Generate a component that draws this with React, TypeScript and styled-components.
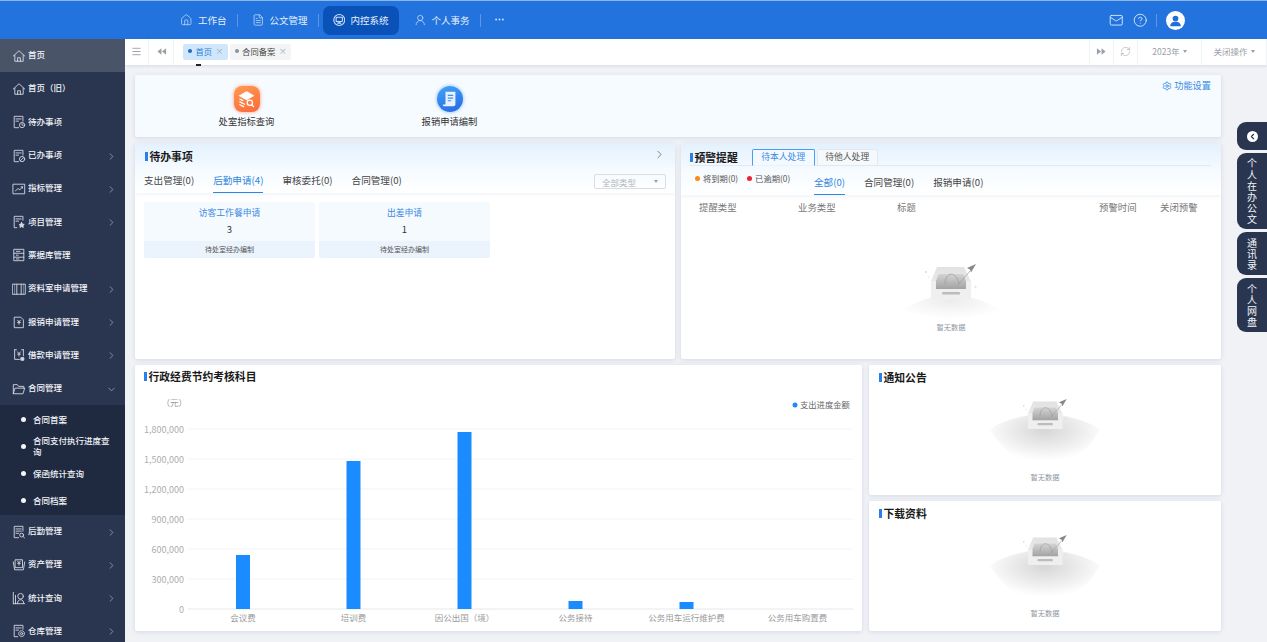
import React from "react";
import styled, { createGlobalStyle } from "styled-components";
import { House, FileText, UserRound, Mail, CircleHelp, ChevronRight, ChevronDown, Menu, RefreshCw, Settings, ChevronLeft } from "lucide-react";

const Global = createGlobalStyle`
  html, body { margin: 0; padding: 0; width: 100%; height: 100%; overflow: hidden; background: #f0f2f6; }
  #root { height: 100%; }
  * { box-sizing: border-box; }
  body { font-family: "Noto Sans CJK SC", "Noto Sans", sans-serif; }
`;

const Page = styled.div`
  position: relative;
  width: 1267px;
  height: 642px;
  overflow: hidden;
  display: flex;
  flex-direction: column;
`;

/* ---------- header ---------- */
const Header = styled.header`
  height: 39px;
  flex: none;
  background: #2273dd;
  border-top: 1px solid #8fb6e8;
  display: flex;
  align-items: center;
  padding: 0 82px 0 170px;
  color: #e6f0fc;
`;
const TopNav = styled.nav`
  display: flex;
  align-items: center;
  flex: 1;
`;
const NavItem = styled.div<{ $active?: boolean }>`
  height: 29px;
  display: flex;
  align-items: center;
  gap: 5.5px;
  padding: 0 10px;
  font-size: 9.5px;
  padding-bottom: 1px;
  border-radius: 7px;
  background: ${(p) => (p.$active ? "#0a52b8" : "transparent")};
  svg { width: 12.5px; height: 14px; stroke-width: 1.4; color: #cfe0f7; }
`;
const NavDots = styled(NavItem)`
  svg { width: 9px; height: 9px; }
`;
const NavDivider = styled.span<{ $hidden?: boolean }>`
  width: 1px;
  height: 13px;
  margin: 0 4px 0 0;
  background: ${(p) => (p.$hidden ? "transparent" : "#5d97e4")};
`;
const HeaderTools = styled.div`
  display: flex;
  align-items: center;
  gap: 9px;
  svg.tool { width: 14.5px; height: 14.5px; stroke-width: 1.4; color: #eaf2fd; }
`;
const ToolDivider = styled.span`
  width: 1px;
  height: 13px;
  background: #5d97e4;
`;
const Avatar = styled.span`
  width: 19px;
  height: 19px;
  border-radius: 50%;
  background: #fff;
  display: flex;
  align-items: center;
  justify-content: center;
  overflow: hidden;
`;

/* ---------- body layout ---------- */
const Body = styled.div`
  flex: 1;
  display: flex;
  min-height: 0;
`;
const Sidebar = styled.aside`
  width: 125px;
  flex: none;
  background: #2a3550;
  color: #f2f4f8;
  overflow: hidden;
`;
const SideItem = styled.div<{ $active?: boolean }>`
  height: 33.3px;
  display: flex;
  align-items: center;
  padding: 0 8px 3px 12px;
  gap: 2px;
  font-size: 8.5px;
  font-weight: 500;
  white-space: nowrap;
  background: ${(p) => (p.$active ? "#4a5469" : "transparent")};
  > svg:first-child { width: 14px; height: 14px; flex: none; color: #d9dde6; margin-top: 3px; }
`;
const SideArrow = styled.span`
  margin-left: auto;
  margin-top: 4px;
  display: flex;
  color: #c2c8d3;
  svg { width: 11px; height: 11px; stroke-width: 1.3; }
`;
const SubMenu = styled.div`
  background: #1f2a40;
  height: 109.6px;
  padding-top: 1px;
`;
const SubItem = styled.div`
  height: 26.8px;
  display: flex;
  align-items: center;
  padding: 0 14px 0 33px;
  position: relative;
  font-size: 8.5px;
  line-height: 11px;
  font-weight: 500;
  &::before {
    content: "";
    position: absolute;
    left: 21px;
    top: 50%;
    width: 5px;
    height: 5px;
    margin-top: -2.5px;
    border-radius: 50%;
    background: #f4f5f8;
  }
`;
const Content = styled.div`
  flex: 1;
  min-width: 0;
  display: flex;
  flex-direction: column;
`;

/* ---------- tab strip ---------- */
const TabStrip = styled.div`
  height: 26px;
  flex: none;
  background: #fff;
  display: flex;
  align-items: stretch;
  box-shadow: 0 1px 3px rgba(60, 80, 110, 0.14);
  position: relative;
`;
const StripButton = styled.div<{ $w: number }>`
  width: ${(p) => p.$w}px;
  flex: none;
  display: flex;
  align-items: center;
  justify-content: center;
  border-right: 1px solid #f2f3f5;
  color: #9aa0a8;
  font-size: 8.5px;
  gap: 1px;
  padding-bottom: 2px;
  svg { width: 11px; height: 11px; }
`;
const StripLead = styled(StripButton)`
  border-left: 1px solid #f2f3f5;
`;
const PageTabs = styled.div`
  flex: 1;
  display: flex;
  align-items: center;
  gap: 2px;
  padding: 0 0 1px 9px;
`;
const PageTab = styled.div<{ $active?: boolean }>`
  height: 16px;
  display: flex;
  align-items: center;
  padding: 0 4px 1px 5px;
  gap: 3.5px;
  border-radius: 2px;
  font-size: 8.3px;
  color: ${(p) => (p.$active ? "#2f7fd6" : "#444")};
  background: ${(p) => (p.$active ? "#cfe6fb" : "#f3f4f5")};
  &::before {
    content: "";
    width: 4px;
    height: 4px;
    border-radius: 50%;
    background: ${(p) => (p.$active ? "#1769cf" : "#8c929a")};
  }
`;
const TabClose = styled.span`
  color: #a0a6ae;
  font-size: 8px;
  line-height: 1;
`;
const Caret = styled.i`
  width: 0;
  height: 0;
  border: 2.5px solid transparent;
  border-top: 3px solid #9aa0a8;
  border-bottom: 0;
  margin-left: 2px;
`;
const StrayMark = styled.span`
  position: absolute;
  left: 71px;
  top: 25px;
  width: 5px;
  height: 2px;
  background: #222;
`;

/* ---------- dashboard ---------- */
const Main = styled.main`
  flex: 1;
  min-height: 0;
  padding: 10px 46px 0 10px;
  display: grid;
  grid-template-rows: 62px 216px 266px;
  row-gap: 6px;
`;
const Card = styled.section`
  background: #fff;
  border-radius: 2px;
  box-shadow: 0 1px 4px rgba(70, 90, 130, 0.16);
  position: relative;
  overflow: hidden;
  min-height: 0;
`;
const ShortcutCard = styled(Card)`
  background: #f6fbff;
  display: flex;
  padding-left: 10px;
`;
const Shortcut = styled.div`
  width: 203px;
  padding-top: 11px;
  display: flex;
  flex-direction: column;
  align-items: center;
  gap: 3px;
  font-size: 9.3px;
  line-height: 13px;
  color: #333;
`;
const ShortIconOrange = styled.div`
  width: 26px;
  height: 26px;
  border-radius: 8px;
  background: linear-gradient(160deg, #ff9a4f, #fb6a3c);
  box-shadow: 0 0 3px 1px rgba(250, 120, 90, 0.45);
  display: flex;
  align-items: center;
  justify-content: center;
`;
const ShortIconBlue = styled(ShortIconOrange)`
  border-radius: 50%;
  background: linear-gradient(160deg, #44a4f5, #2468e4);
  box-shadow: 0 0 3px 1px rgba(80, 160, 250, 0.45);
`;
const SettingLink = styled.div`
  position: absolute;
  right: 10px;
  top: 4px;
  display: flex;
  align-items: center;
  gap: 2px;
  color: #3a8ae2;
  font-size: 9.2px;
  line-height: 13px;
  svg { width: 10px; height: 10px; }
`;
const TwoCols = styled.div`
  display: grid;
  grid-template-columns: 540px 540px;
  column-gap: 6px;
  min-height: 0;
`;
const ChartRow = styled.div`
  display: grid;
  grid-template-columns: 727px 352px;
  column-gap: 7px;
  min-height: 0;
`;
const SideStack = styled.div`
  display: grid;
  grid-template-rows: 130px 130px;
  row-gap: 6px;
  min-height: 0;
`;
const PanelHead = styled.div`
  height: 50px;
  background: linear-gradient(180deg, #e3f1fd 0%, #f6fbff 55%, #fff 100%);
  box-shadow: 0 2px 3px rgba(90, 120, 170, 0.08);
  position: relative;
`;
const Title = styled.h3`
  margin: 0;
  font-size: 10.8px;
  line-height: 14px;
  font-weight: 700;
  color: #1a1a1a;
  display: flex;
  align-items: center;
  gap: 2px;
  &::before {
    content: "";
    width: 2.5px;
    height: 9px;
    background: #2a7ff0;
  }
`;
const TodoHeadRow = styled.div`
  padding: 6px 9px 0 10px;
  display: flex;
  justify-content: space-between;
  align-items: center;
  svg { width: 13px; height: 13px; color: #555; stroke-width: 1.3; margin-top: -4px; }
`;
const TabRow = styled.div`
  display: flex;
  gap: 19px;
  font-size: 9.6px;
  color: #444;
`;
const TodoTabs = styled(TabRow)`
  position: absolute;
  left: 9px;
  right: 9px;
  bottom: 0;
  align-items: flex-end;
`;
const TabLabel = styled.div<{ $active?: boolean }>`
  height: 20px;
  line-height: 14px;
  white-space: nowrap;
  color: ${(p) => (p.$active ? "#2f86e0" : "#444")};
  border-bottom: 1px solid ${(p) => (p.$active ? "#2f86e0" : "transparent")};
`;
const SelectBox = styled.div`
  margin-left: auto;
  align-self: center;
  width: 72px;
  height: 15px;
  margin-bottom: 3px;
  border: 1px solid #d9dce0;
  border-radius: 2px;
  display: flex;
  align-items: center;
  justify-content: space-between;
  padding: 0 7px;
  font-size: 8.5px;
  color: #b0b4ba;
`;
const TodoCards = styled.div`
  padding: 9px 9px;
  display: flex;
  gap: 4px;
`;
const TodoCard = styled.div`
  width: 171px;
  height: 56px;
  border-radius: 2px;
  overflow: hidden;
  background: #f5faff;
  display: flex;
  flex-direction: column;
  align-items: center;
`;
const TodoName = styled.div`
  font-size: 8.8px;
  line-height: 13px;
  color: #3e8ae0;
  margin-top: 4px;
`;
const TodoCount = styled.div`
  font-size: 9.5px;
  line-height: 13px;
  color: #333;
  margin-top: 4px;
`;
const TodoFoot = styled.div`
  margin-top: auto;
  width: 100%;
  height: 17px;
  background: #ebf3fc;
  font-size: 7px;
  line-height: 17px;
  text-align: center;
  color: #555;
`;
const WarnHead = styled(PanelHead)`
  height: 52px;
  padding: 6px 10px 0 9px;
`;
const WarnTop = styled.div`
  display: flex;
  align-items: flex-end;
  gap: 14px;
  height: 17px;
  border-bottom: 1px solid #dfeaf6;
  > h3 { align-self: center; }
`;
const BoxTabs = styled.div`
  display: flex;
  gap: 2px;
`;
const BoxTab = styled.div<{ $active?: boolean }>`
  width: ${(p) => (p.$active ? 63 : 61)}px;
  height: 17px;
  margin-bottom: -1px;
  border: 1px solid ${(p) => (p.$active ? "#4a9df0" : "#e2e8ef")};
  border-bottom-color: ${(p) => (p.$active ? "#e8f3fd" : "#e2e8ef")};
  border-radius: 2px 2px 0 0;
  text-align: center;
  font-size: 8.8px;
  line-height: 13px;
  color: ${(p) => (p.$active ? "#3d8de4" : "#555")};
  background: ${(p) => (p.$active ? "#f3f9ff" : "#f6f9fc")};
`;
const WarnSub = styled.div`
  display: flex;
  align-items: flex-start;
  height: 29px;
`;
const Legend = styled.div`
  width: 124px;
  padding: 6px 0 0 5px;
  display: flex;
  gap: 9px;
  font-size: 8.3px;
  line-height: 12px;
  color: #555;
`;
const LegendItem = styled.span<{ $c: string }>`
  display: flex;
  align-items: center;
  gap: 3px;
  white-space: nowrap;
  &::before {
    content: "";
    width: 5px;
    height: 5px;
    border-radius: 50%;
    background: ${(p) => p.$c};
  }
`;
const WarnTabs = styled(TabRow)`
  padding-top: 9px;
  align-items: flex-end;
`;
const TableHead = styled.div`
  display: grid;
  grid-template-columns: 99px 99px 202px 61px 1fr;
  padding: 6px 0 0 18px;
  font-size: 9.4px;
  line-height: 13px;
  color: #777;
`;
const Empty = styled.div<{ $top: number }>`
  display: flex;
  flex-direction: column;
  align-items: center;
  padding-top: ${(p) => p.$top}px;
`;
const EmptyText = styled.div<{ $shift: number }>`
  font-size: 7.2px;
  line-height: 10px;
  color: #8d959e;
  margin-top: ${(p) => p.$shift}px;
`;
const ChartTitle = styled.div`
  padding: 4px 10px 0 9px;
`;
const NoticeTitle = styled.div`
  padding: 5px 9px 0 10px;
`;
const ChartSvg = styled.svg`
  display: block;
  font-family: "Noto Sans CJK SC", "Noto Sans", sans-serif;
  position: absolute;
  left: 0;
  top: 0;
`;

/* ---------- right rail ---------- */
const Rail = styled.div`
  position: absolute;
  right: 0;
  top: 122px;
  width: 30px;
  display: flex;
  flex-direction: column;
  gap: 3px;
`;
const RailTab = styled.div<{ $h: number }>`
  height: ${(p) => p.$h}px;
  background: #2a3550;
  border-radius: 9px 0 0 9px;
  color: #f3f5f9;
  font-size: 10px;
  line-height: 11.2px;
  display: flex;
  align-items: center;
  justify-content: center;
  text-align: center;
`;
const RailText = styled.span`
  width: 11px;
  word-break: break-all;
  display: block;
`;
const RailKnob = styled.span`
  width: 11px;
  height: 11px;
  border-radius: 50%;
  background: #fff;
  display: flex;
  align-items: center;
  justify-content: center;
  color: #2a3550;
  svg { width: 9px; height: 9px; stroke-width: 3; }
`;

/* ---------- drawings ---------- */
const S = ({ children }: { children: React.ReactNode }) => (
  <svg viewBox="0 0 16 16" fill="none" stroke="currentColor" strokeWidth="1" strokeLinecap="round" strokeLinejoin="round">
    {children}
  </svg>
);
const Yen = ({ x = 8, y = 7.5 }: { x?: number; y?: number }) => (
  <path d={`M${x - 1.6} ${y - 2}L${x} ${y}L${x + 1.6} ${y - 2}M${x} ${y}V${y + 2.6}M${x - 1.5} ${y + 0.6}H${x + 1.5}`} />
);
const icons: Record<string, React.ReactNode> = {
  home: <S><path d="M1.5 8 8 2l6.5 6M3.2 7v7h9.6V7M6.4 14v-4h3.2v4" /></S>,
  todo: <S><path d="M12.5 7V1.5h-10v13h5M4.5 4.5h6M4.5 7h3" /><circle cx="11.5" cy="11.5" r="3" /><path d="M11.5 10v1.6h1.3" /></S>,
  done: <S><path d="M12.5 7V1.5h-10v13h5M4.5 4.5h6M4.5 7h3" /><circle cx="11.5" cy="11.5" r="3" /><path d="m9.6 13.4 3.8-3.8" /></S>,
  chart: <S><rect x="1.5" y="2.5" width="13" height="11" /><path d="m4 10 3-2.5 2 1.5 3-3.5M10.4 5.5H12V7" /></S>,
  project: <S><path d="M12.5 6V1.5h-10v13h3M4.5 4.5h6M4.5 7h3" /><path d="m11 8.5 1 2 2 .3-1.5 1.4.4 2-1.9-1-1.9 1 .4-2L8 10.8l2-.3z" fill="currentColor" /></S>,
  ticket: <S><rect x="2.5" y="1.5" width="11" height="13" /><path d="M2.5 6h11M2.5 10.5h11M5 3.8h4M5 8.2h2M5 12.5h3" /></S>,
  cols: <S><rect x=".8" y="2.5" width="14.4" height="11.5" /><path d="M5.5 2.5V14M10.5 2.5V14" /><path d="M3 2.5V14M13 2.5V14" strokeWidth=".5" /></S>,
  bill: <S><path d="M3 2.5h7l3 3v9H3z" /><Yen y={8} /></S>,
  loan: <S><path d="M3 2v11h5.5M13 2v7M3 2h2M11 2h2" /><Yen y={6.5} /><rect x="10.5" y="11" width="3" height="3" fill="currentColor" /></S>,
  folder: <S><path d="M1.5 13V3h4.5l1.5 2h6v2M1.5 13 3.5 7h11l-1.8 6z" /></S>,
  log: <S><path d="M12.5 7V1.5h-10v13h5M4.5 4.5h6M4.5 7h6M4.5 9.5h3" /><circle cx="11" cy="11.5" r="2.2" /><path d="m12.7 13.2 1.6 1.5" /></S>,
  asset: <S><path d="M1.5 4.5 3 13.5h10l1.5-9M4 2h8v9H4z" /><Yen y={5.5} /></S>,
  stat: <S><path d="M1.5 1.5v13M4 5v9.5M1.5 14.5h13" /><circle cx="9.8" cy="6" r="3.2" /><path d="M6.3 14c0-2.5 1.3-4 3.5-4s3.5 1.5 3.5 4" /></S>,
  store: <S><path d="M12.5 6V1.5h-10v13h4M4.5 4.5h6M4.5 7h3" /><circle cx="11" cy="11" r="1.3" /><circle cx="11" cy="11" r="3.3" strokeDasharray="1.6 .8" /></S>,
};

const EmptyArt = ({ tall, id }: { tall?: boolean; id: string }) => (
  <svg width={tall ? 110 : 126} height={tall ? 74 : 62} viewBox={tall ? "0 0 110 74" : "0 0 126 62"} aria-hidden>
    <defs>
      <radialGradient id={`${id}r`} cx=".5" cy={tall ? ".3" : ".2"} r={tall ? ".56" : ".6"}>
        <stop offset="0" stopColor={tall ? "#d6d6d6" : "#ececec"} />
        <stop offset=".6" stopColor={tall ? "#eeeeee" : "#f8f8f8"} />
        <stop offset="1" stopColor="#fff" />
      </radialGradient>
      <linearGradient id={`${id}i`} x1="0" y1="0" x2="0" y2="1">
        <stop offset="0" stopColor="#d4d4d4" />
        <stop offset="1" stopColor="#a2a2a2" />
      </linearGradient>
      <linearGradient id={`${id}t`} x1="0" y1="0" x2="0" y2="1">
        <stop offset="0" stopColor="#e2e2e2" />
        <stop offset="1" stopColor="#efefef" />
      </linearGradient>
    </defs>
    {tall ? (
      <path d="M0 33C18 22 40 18 55 18s37 4 55 15C96 60 70 70 55 72 40 70 14 60 0 33z" fill={`url(#${id}r)`} />
    ) : (
      <path d="M14 47C34 35 50 32 63 32s29 3 49 15C92 60 78 62 63 62S34 60 14 47z" fill={`url(#${id}r)`} />
    )}
    <g transform={tall ? "translate(38 5.5) scale(.86)" : "translate(43 4)"}>
      <path d="M6 0h27l7 14v18H0V14z" fill={`url(#${id}t)`} />
      <path d="M5 14 7.5 7h25L35 14v8H5z" fill={`url(#${id}i)`} />
      <path d="M14 17c0-13 12-13 14 0" fill="none" stroke="#9a9a9a" strokeWidth=".7" />
      <path d="M0 14h5v8h30v-8h5v18H0z" fill="#efefef" />
      <rect x="11" y="25" width="18" height="2.6" rx="1.2" fill="#bcbcbc" />
      <path d="m27 18 12-14" stroke="#9c9c9c" strokeWidth=".7" />
      <path d="m45-3-9 4 3 1.5 1 3z" fill="#888" />
      <path d="M-6 5h2M-5 4v2" stroke="#ccc" strokeWidth=".6" />
      <circle cx="-2" cy="10" r=".6" fill="#ccc" />
      <path d="M43 20h3M44.5 18.5v3" stroke="#ddd" strokeWidth=".6" />
    </g>
  </svg>
);

const ticks = ["1,800,000", "1,500,000", "1,200,000", "900,000", "600,000", "300,000", "0"];
const bars = [
  { name: "会议费", cx: 108, top: 190 },
  { name: "培训费", cx: 218.5, top: 96 },
  { name: "因公出国（境）", cx: 329.5, top: 67 },
  { name: "公务接待", cx: 440.5, top: 236 },
  { name: "公务用车运行维护费", cx: 551.5, top: 237 },
  { name: "公务用车购置费", cx: 662.5, top: 244 },
];

const ExpenseChart = () => (
  <ChartSvg width="727" height="266" viewBox="0 0 727 266">
    <text x="52" y="41" fontSize="8.5" fill="#9a9a9a" textAnchor="end">（元）</text>
    {ticks.map((t, i) => (
      <g key={t}>
        <line x1="53" x2="718" y1={64 + i * 30} y2={64 + i * 30} stroke={i === 6 ? "#e6e8ea" : "#f3f4f5"} />
        <text x="49" y={67.5 + i * 30} fontSize="9" fill="#adadad" textAnchor="end">{t}</text>
      </g>
    ))}
    {bars.map((b) => (
      <g key={b.name}>
        {b.top < 244 && <rect x={b.cx - 7} y={b.top} width="14" height={244 - b.top} fill="#1a8cff" />}
        <text x={b.cx} y="256" fontSize="8.5" fill="#9a9a9a" textAnchor="middle">{b.name}</text>
      </g>
    ))}
    <circle cx="660" cy="40" r="2.5" fill="#1a8cff" />
    <text x="665" y="43" fontSize="8.3" fill="#666">支出进度金额</text>
  </ChartSvg>
);

const sideTop: [string, string, boolean, boolean?][] = [
  ["home", "首页", false, true],
  ["home", "首页（旧）", false],
  ["todo", "待办事项", false],
  ["done", "已办事项", true],
  ["chart", "指标管理", true],
  ["project", "项目管理", true],
  ["ticket", "票据库管理", false],
  ["cols", "资料室申请管理", true],
  ["bill", "报销申请管理", true],
  ["loan", "借款申请管理", true],
];
const sideBottom: [string, string][] = [
  ["log", "后勤管理"],
  ["asset", "资产管理"],
  ["stat", "统计查询"],
  ["store", "仓库管理"],
];

export default function App() {
  return (
    <Page>
      <Global />
      <Header>
        <TopNav>
          <NavItem><House />工作台</NavItem>
          <NavDivider />
          <NavItem><FileText />公文管理</NavItem>
          <NavDivider />
          <NavItem $active>
            <svg viewBox="0 0 16 16" fill="none" stroke="currentColor" strokeWidth="1.1">
              <circle cx="8" cy="8" r="7" />
              <rect x="4" y="4.5" width="8" height="5.5" rx="1" />
              <path d="M8 10v2M5.5 12h5" />
            </svg>
            内控系统
          </NavItem>
          <NavDivider $hidden />
          <NavItem><UserRound />个人事务</NavItem>
          <NavDivider />
          <NavDots>
            <svg viewBox="0 0 12 12" fill="currentColor" stroke="none">
              <circle cx="1.5" cy="6" r="1.3" /><circle cx="6" cy="6" r="1.3" /><circle cx="10.5" cy="6" r="1.3" />
            </svg>
          </NavDots>
        </TopNav>
        <HeaderTools>
          <Mail className="tool" />
          <CircleHelp className="tool" />
          <ToolDivider />
          <Avatar>
            <svg width="13" height="13" viewBox="0 0 16 16" fill="#1f6fd8">
              <circle cx="8" cy="5.5" r="3.5" />
              <path d="M1.5 15c0-4 3-5.5 6.5-5.5S14.5 11 14.5 15z" />
            </svg>
          </Avatar>
        </HeaderTools>
      </Header>
      <Body>
        <Sidebar>
          {sideTop.map(([ic, label, arrow, active]) => (
            <SideItem key={label} $active={active}>
              {icons[ic]}
              {label}
              {arrow && <SideArrow><ChevronRight /></SideArrow>}
            </SideItem>
          ))}
          <SideItem>
            {icons.folder}
            合同管理
            <SideArrow><ChevronDown /></SideArrow>
          </SideItem>
          <SubMenu>
            <SubItem>合同首案</SubItem>
            <SubItem>合同支付执行进度查询</SubItem>
            <SubItem>保函统计查询</SubItem>
            <SubItem>合同档案</SubItem>
          </SubMenu>
          {sideBottom.map(([ic, label]) => (
            <SideItem key={label}>
              {icons[ic]}
              {label}
              <SideArrow><ChevronRight /></SideArrow>
            </SideItem>
          ))}
        </Sidebar>
        <Content>
          <TabStrip>
            <StripButton $w={24}><Menu /></StripButton>
            <StripButton $w={25}>
              <svg viewBox="0 0 12 12" fill="currentColor"><path d="M6 2.5v7L1.5 6zM11 2.5v7L6.5 6z" /></svg>
            </StripButton>
            <PageTabs>
              <PageTab $active>首页<TabClose>×</TabClose></PageTab>
              <PageTab>合同备案<TabClose>×</TabClose></PageTab>
            </PageTabs>
            <StrayMark />
            <StripLead $w={25}>
              <svg viewBox="0 0 12 12" fill="currentColor"><path d="M1 2.5v7L5.5 6zM6 2.5v7L10.5 6z" /></svg>
            </StripLead>
            <StripButton $w={24}><RefreshCw strokeWidth={1.2} /></StripButton>
            <StripButton $w={64}>2023年<Caret /></StripButton>
            <StripButton $w={65}>关闭操作<Caret /></StripButton>
          </TabStrip>
          <Main>
            <ShortcutCard>
              <Shortcut>
                <ShortIconOrange>
                  <svg width="19" height="19" viewBox="0 0 20 20" fill="none" stroke="#fff" strokeWidth="1.3" strokeLinecap="round">
                    <path d="M10 2 17 6l-7 4-7-4z" fill="#fff" />
                    <path d="M3 9.5l3 1.7M3 12.5l5 2.5M3 15.5l4 2" />
                    <circle cx="13.5" cy="13.5" r="2.8" />
                    <path d="m15.5 15.5 2 2" />
                  </svg>
                </ShortIconOrange>
                处室指标查询
              </Shortcut>
              <Shortcut>
                <ShortIconBlue>
                  <svg width="18" height="18" viewBox="0 0 20 20">
                    <path d="M5 2h11v14a2 2 0 0 1-2 2H3a2 2 0 0 1-1-2h3z" fill="#e8f2fe" />
                    <path d="M7.5 6h6M7.5 9h6M7.5 12h4" stroke="#3f8ff0" strokeWidth="1.2" />
                  </svg>
                </ShortIconBlue>
                报销申请编制
              </Shortcut>
              <SettingLink><Settings />功能设置</SettingLink>
            </ShortcutCard>

            <TwoCols>
              <Card>
                <PanelHead>
                  <TodoHeadRow>
                    <Title>待办事项</Title>
                    <ChevronRight />
                  </TodoHeadRow>
                  <TodoTabs>
                    <TabLabel>支出管理(0)</TabLabel>
                    <TabLabel $active>后勤申请(4)</TabLabel>
                    <TabLabel>审核委托(0)</TabLabel>
                    <TabLabel>合同管理(0)</TabLabel>
                    <SelectBox>全部类型<Caret /></SelectBox>
                  </TodoTabs>
                </PanelHead>
                <TodoCards>
                  <TodoCard>
                    <TodoName>访客工作餐申请</TodoName>
                    <TodoCount>3</TodoCount>
                    <TodoFoot>待处室经办编制</TodoFoot>
                  </TodoCard>
                  <TodoCard>
                    <TodoName>出差申请</TodoName>
                    <TodoCount>1</TodoCount>
                    <TodoFoot>待处室经办编制</TodoFoot>
                  </TodoCard>
                </TodoCards>
              </Card>
              <Card>
                <WarnHead>
                  <WarnTop>
                    <Title>预警提醒</Title>
                    <BoxTabs>
                      <BoxTab $active>待本人处理</BoxTab>
                      <BoxTab>待他人处理</BoxTab>
                    </BoxTabs>
                  </WarnTop>
                  <WarnSub>
                    <Legend>
                      <LegendItem $c="#f98a12">将到期(0)</LegendItem>
                      <LegendItem $c="#ee2233">已逾期(0)</LegendItem>
                    </Legend>
                    <WarnTabs>
                      <TabLabel $active>全部(0)</TabLabel>
                      <TabLabel>合同管理(0)</TabLabel>
                      <TabLabel>报销申请(0)</TabLabel>
                    </WarnTabs>
                  </WarnSub>
                </WarnHead>
                <TableHead>
                  <span>提醒类型</span>
                  <span>业务类型</span>
                  <span>标题</span>
                  <span>预警时间</span>
                  <span>关闭预警</span>
                </TableHead>
                <Empty $top={49}>
                  <EmptyArt id="a" />
                  <EmptyText $shift={-3}>暂无数据</EmptyText>
                </Empty>
              </Card>
            </TwoCols>

            <ChartRow>
              <Card>
                <ChartTitle><Title>行政经费节约考核科目</Title></ChartTitle>
                <ExpenseChart />
              </Card>
              <SideStack>
                <Card>
                  <NoticeTitle><Title>通知公告</Title></NoticeTitle>
                  <Empty $top={12}>
                    <EmptyArt tall id="b" />
                    <EmptyText $shift={2}>暂无数据</EmptyText>
                  </Empty>
                </Card>
                <Card>
                  <NoticeTitle><Title>下载资料</Title></NoticeTitle>
                  <Empty $top={12}>
                    <EmptyArt tall id="c" />
                    <EmptyText $shift={2}>暂无数据</EmptyText>
                  </Empty>
                </Card>
              </SideStack>
            </ChartRow>
          </Main>
        </Content>
      </Body>
      <Rail>
        <RailTab $h={28}><RailKnob><ChevronLeft /></RailKnob></RailTab>
        <RailTab $h={76}><RailText>个人在办公文</RailText></RailTab>
        <RailTab $h={43}><RailText>通讯录</RailText></RailTab>
        <RailTab $h={54}><RailText>个人网盘</RailText></RailTab>
      </Rail>
    </Page>
  );
}
